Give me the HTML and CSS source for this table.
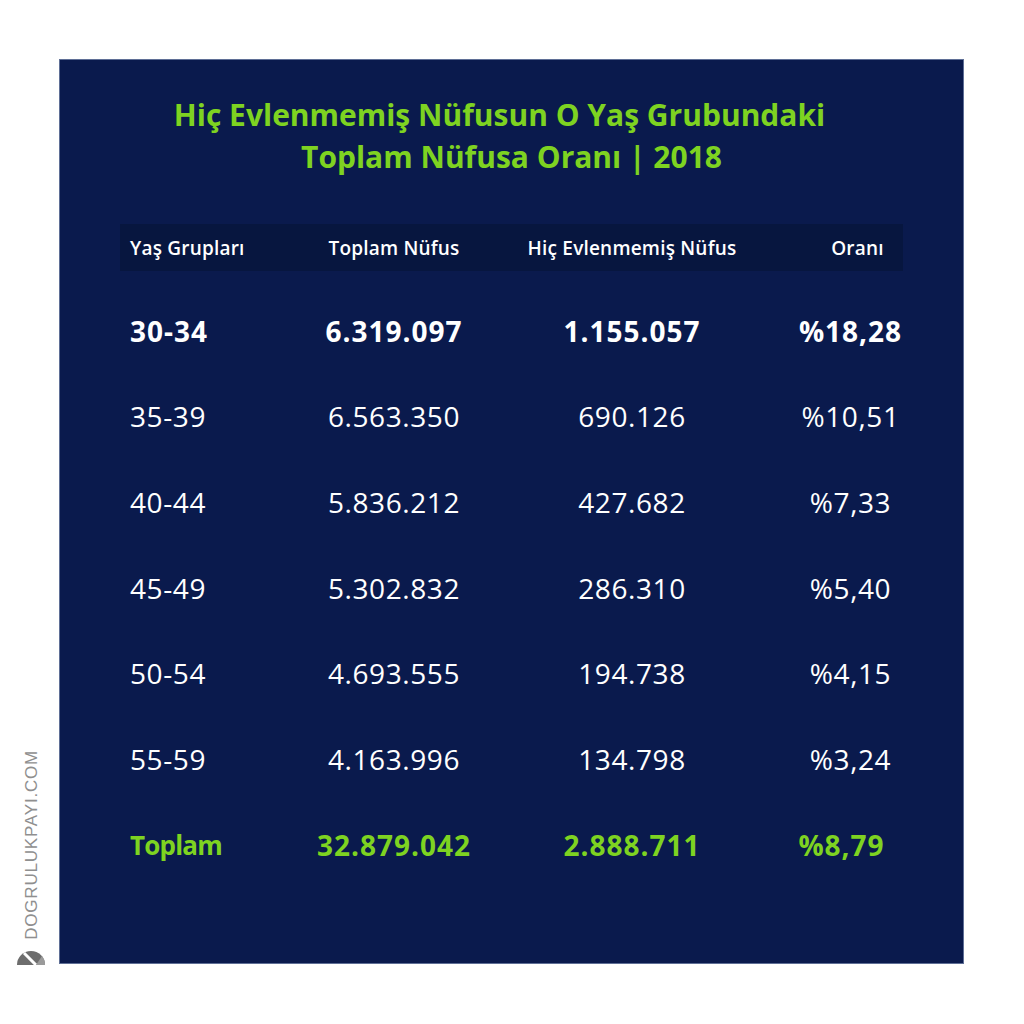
FILE: index.html
```html
<!DOCTYPE html>
<html lang="tr">
<head>
<meta charset="utf-8">
<title>Hiç Evlenmemiş Nüfus</title>
<link rel="stylesheet" href="styles.css">
</head>
<body>
<div class="page">
  <div class="card">
    <h1 class="title"><span class="line1">Hiç Evlenmemiş Nüfusun O Yaş Grubundaki</span><br>Toplam Nüfusa Oranı | 2018</h1>
    <div class="table">
      <div class="head">
        <div class="c1">Yaş Grupları</div>
        <div class="c2">Toplam Nüfus</div>
        <div class="c3">Hiç Evlenmemiş Nüfus</div>
        <div class="c4 h4">Oranı</div>
      </div>
      <div class="row bold"><div class="c1">30-34</div><div class="c2">6.319.097</div><div class="c3">1.155.057</div><div class="c4">%18,28</div></div>
      <div class="row"><div class="c1">35-39</div><div class="c2">6.563.350</div><div class="c3">690.126</div><div class="c4">%10,51</div></div>
      <div class="row"><div class="c1">40-44</div><div class="c2">5.836.212</div><div class="c3">427.682</div><div class="c4">%7,33</div></div>
      <div class="row"><div class="c1">45-49</div><div class="c2">5.302.832</div><div class="c3">286.310</div><div class="c4">%5,40</div></div>
      <div class="row"><div class="c1">50-54</div><div class="c2">4.693.555</div><div class="c3">194.738</div><div class="c4">%4,15</div></div>
      <div class="row"><div class="c1">55-59</div><div class="c2">4.163.996</div><div class="c3">134.798</div><div class="c4">%3,24</div></div>
      <div class="row bold total"><div class="c1">Toplam</div><div class="c2">32.879.042</div><div class="c3">2.888.711</div><div class="c4">%8,79</div></div>
    </div>
  </div>
  <div class="mark">
    <span class="mark-text">DOGRULUKPAYI.COM</span>
    <svg class="mark-logo" viewBox="0 0 30 20" width="30" height="20">
      <path d="M1 19 A14 14 0 0 1 29 19 Z" fill="#6d6d6d"/>
      <path d="M8 7 L20 19" stroke="#fff" stroke-width="3" fill="none"/>
      <path d="M20 19 L29 19 A14 14 0 0 0 26 10 Z" fill="#9a9a9a"/>
    </svg>
  </div>
</div>
</body>
</html>
```
FILE: styles.css
```css
html, body {
  margin: 0;
  padding: 0;
  background: #ffffff;
}
.page {
  position: relative;
  width: 1024px;
  height: 1024px;
  padding: 60px 0 0 60px;
  box-sizing: border-box;
  font-family: "Open Sans", "Noto Sans", sans-serif;
}
.card {
  width: 903px;
  height: 903px;
  background: #0a1a4d;
  box-sizing: border-box;
  padding: 34px 0 0 60px;
  box-shadow: 0 0 0 1px #5f6f96;
}
.title {
  margin: 0 0 46px -60px;
  width: 903px;
  text-align: center;
  color: #7ed321;
  font-size: 30px;
  line-height: 42px;
  font-weight: 700;
  letter-spacing: 0;
}
.line1 {
  margin-right: 24px;
}
.table {
  width: 783px;
  color: #ffffff;
}
.head, .row {
  display: grid;
  grid-template-columns: 170px 208px 268px 137px;
  align-items: center;
}
.head {
  height: 47px;
  background: #07163f;
  font-size: 19px;
  font-weight: 600;
  margin-bottom: 17px;
  letter-spacing: 0.2px;
}
.row {
  height: 85.67px;
  font-size: 28px;
  font-weight: 400;
  letter-spacing: 0.6px;
}
.row.bold {
  font-weight: 700;
  letter-spacing: 1px;
}
.row.total {
  color: #7ed321;
}
.row.total .c1 {
  font-size: 26px;
  letter-spacing: -0.8px;
}
.row.total .c4 {
  padding-right: 18px;
}
.c1 {
  padding-left: 10px;
}
.c2, .c3 {
  text-align: center;
}
.c4 {
  text-align: center;
  padding-left: 32px;
}
.c4.h4 {
  padding-left: 46px;
}
.mark {
  position: absolute;
  left: 16px;
  top: 750px;
  width: 30px;
  display: flex;
  flex-direction: column;
  align-items: center;
  gap: 6px;
}
.mark-text {
  writing-mode: vertical-rl;
  transform: rotate(180deg);
  color: #8f8f8f;
  font-family: "Liberation Sans", "DejaVu Sans", sans-serif;
  font-size: 17px;
  letter-spacing: 0.8px;
  line-height: 1;
}
.mark-logo {
  display: block;
}
```
